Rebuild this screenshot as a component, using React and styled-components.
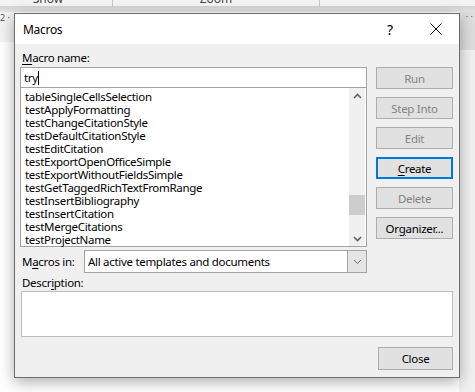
import React from 'react';
import styled, { createGlobalStyle } from 'styled-components';

const macros = [
  'tableSingleCellsSelection',
  'testApplyFormatting',
  'testChangeCitationStyle',
  'testDefaultCitationStyle',
  'testEditCitation',
  'testExportOpenOfficeSimple',
  'testExportWithoutFieldsSimple',
  'testGetTaggedRichTextFromRange',
  'testInsertBibliography',
  'testInsertCitation',
  'testMergeCitations',
  'testProjectName',
];

const GlobalStyle = createGlobalStyle`
  body {
    margin: 0;
    background: #ffffff;
    overflow: hidden;
    font-family: "Noto Sans", "Open Sans", sans-serif;
  }
`;

const Page = styled.div`
  position: relative;
  width: 475px;
  height: 392px;
  overflow: hidden;
  background: #ffffff;
`;

const Ribbon = styled.div`
  height: 6px;
  display: flex;
  background: #f3f3f3;
  overflow: hidden;
`;

const RibbonGroup = styled.div`
  width: ${(p) => p.w}px;
  box-sizing: border-box;
  padding-right: ${(p) => p.pr || 0}px;
  border-right: 1px solid #c6c6c6;
  font-size: 12px;
  line-height: 12px;
  color: #444;
  text-align: center;
  margin-top: -7px;
`;

const RibbonEdge = styled.div`
  height: 6px;
  background: linear-gradient(#d2d2d2, #e4e4e4);
`;

const Workspace = styled.div`
  display: flex;
  height: 380px;
`;

const SideRuler = styled.div`
  width: 14px;
  background: linear-gradient(#f2f2f2 0, #f2f2f2 30px, #ffffff 30px);
  font-size: 9px;
  color: #555;
  padding-top: 1px;
  line-height: 10px;
`;

const Document = styled.div`
  flex: 1;
  background: #ffffff;
`;

const RightRuler = styled.div`
  width: 16px;
  background: linear-gradient(#dedede 0, #dedede 38px, #f1f1f1 38px);
  font-size: 9px;
  color: #666;
  line-height: 10px;
  text-align: right;
  padding-right: 2px;
  box-sizing: border-box;
`;

const Dialog = styled.div`
  position: absolute;
  left: 14px;
  top: 13px;
  width: 446px;
  height: 365px;
  box-sizing: border-box;
  border: 1px solid #6d6d6d;
  background: #f0f0f0;
  box-shadow: 0 4px 14px rgba(0, 0, 0, 0.32);
  display: flex;
  flex-direction: column;
  font-size: 11.5px;
  letter-spacing: -0.3px;
  color: #000;
`;

const TitleBar = styled.div`
  height: 30px;
  flex-shrink: 0;
  background: #ffffff;
  display: flex;
  align-items: center;
  padding-left: 8px;
`;

const Title = styled.div`
  flex: 1;
  font-size: 12px;
`;

const Help = styled.div`
  width: 46px;
  text-align: center;
  font-size: 14px;
`;

const CloseX = styled.div`
  width: 46px;
  display: flex;
  justify-content: center;
  align-items: center;
`;

const Body = styled.div`
  flex: 1;
  display: flex;
  flex-direction: column;
  padding: 0 6px 7px 5px;
`;

const Top = styled.div`
  display: flex;
  gap: 9px;
`;

const LeftCol = styled.div`
  width: 347px;
  display: flex;
  flex-direction: column;
`;

const Label = styled.div`
  line-height: 15px;
  padding-left: 2px;
  margin: ${(p) => p.m || '0'};
  u {
    text-decoration: underline;
    text-underline-offset: 2px;
  }
`;

const NameInput = styled.div`
  height: 20px;
  box-sizing: border-box;
  border: 1px solid #a3a3a3;
  border-bottom: none;
  background: #fff;
  padding-left: 3px;
  display: flex;
  align-items: center;
`;

const Caret = styled.span`
  display: inline-block;
  width: 1px;
  height: 14px;
  background: #000;
`;

const List = styled.div`
  height: 160px;
  box-sizing: border-box;
  border: 1px solid #a3a3a3;
  background: #fff;
  display: flex;
`;

const Items = styled.div`
  flex: 1;
  padding: 2px 0 0 4px;
`;

const Item = styled.div`
  line-height: 13px;
  height: 13px;
  white-space: nowrap;
`;

const ScrollBar = styled.div`
  width: 16px;
  margin-right: 1px;
  background: #f0f0f0;
  display: flex;
  flex-direction: column;
  align-items: center;
  justify-content: space-between;
  padding: 5px 0 4px;
  box-sizing: border-box;
  position: relative;
`;

const Thumb = styled.div`
  position: absolute;
  left: 0;
  right: 0;
  top: 107px;
  height: 20px;
  background: #cdcdcd;
`;

const SelectRow = styled.div`
  display: flex;
  align-items: center;
  margin-top: 3px;
`;

const Select = styled.div`
  margin-left: auto;
  width: 283px;
  height: 23px;
  box-sizing: border-box;
  border: 1px solid #a3a3a3;
  background: #fff;
  display: flex;
`;

const SelectText = styled.div`
  flex: 1;
  line-height: 21px;
  padding-left: 3px;
`;

const DropButton = styled.div`
  width: 18px;
  background: #e5e5e5;
  border-left: 1px solid #a3a3a3;
  display: flex;
  align-items: center;
  justify-content: center;
`;

const RightCol = styled.div`
  width: 77px;
  display: flex;
  flex-direction: column;
  gap: 8px;
  padding-top: 23px;
`;

const Button = styled.div`
  height: 22px;
  box-sizing: border-box;
  border: ${(p) => (p.focused ? '2px solid #0078d7' : '1px solid #adadad')};
  background: #e1e1e1;
  color: ${(p) => (p.disabled ? '#838383' : '#000')};
  display: flex;
  align-items: center;
  justify-content: center;
  u {
    text-underline-offset: 2px;
  }
`;

const DescBox = styled.div`
  height: 46px;
  margin-left: 1px;
  box-sizing: border-box;
  border: 1px solid #bdbdbd;
  background: #fff;
`;

const Footer = styled.div`
  display: flex;
  justify-content: flex-end;
  margin-top: 10px;
`;

const CloseButton = styled(Button)`
  width: 75px;
  height: 23px;
`;

const Chevron = ({ dir = 'down', color = '#606060', w = 1.6 }) => (
  <svg width="9" height="6" viewBox="0 0 9 6">
    <path
      d={dir === 'up' ? 'M1 5 L4.5 1.5 L8 5' : 'M1 1 L4.5 4.5 L8 1'}
      fill="none"
      stroke={color}
      strokeWidth={w}
    />
  </svg>
);

export default function App() {
  return (
    <Page>
      <GlobalStyle />
      <Ribbon>
        <RibbonGroup w={113} pr={16}>Show</RibbonGroup>
        <RibbonGroup w={207}>Zoom</RibbonGroup>
      </Ribbon>
      <RibbonEdge />
      <Workspace>
        <SideRuler>2 ·</SideRuler>
        <Document />
        <RightRuler>· ·</RightRuler>
      </Workspace>

      <Dialog>
        <TitleBar>
          <Title>Macros</Title>
          <Help>?</Help>
          <CloseX>
            <svg width="12" height="12" viewBox="0 0 12 12">
              <path d="M0.5 0.5 L11.5 11.5 M11.5 0.5 L0.5 11.5" stroke="#000" strokeWidth="1" />
            </svg>
          </CloseX>
        </TitleBar>
        <Body>
          <Top>
            <LeftCol>
              <Label m="6px 0 2px">
                <u>M</u>acro name:
              </Label>
              <NameInput>
                try<Caret />
              </NameInput>
              <List>
                <Items>
                  {macros.map((m) => (
                    <Item key={m}>{m}</Item>
                  ))}
                </Items>
                <ScrollBar>
                  <Chevron dir="up" />
                  <Thumb />
                  <Chevron dir="down" />
                </ScrollBar>
              </List>
              <SelectRow>
                <Label>
                  M<u>a</u>cros in:
                </Label>
                <Select>
                  <SelectText>All active templates and documents</SelectText>
                  <DropButton>
                    <Chevron dir="down" color="#666" w={1} />
                  </DropButton>
                </Select>
              </SelectRow>
            </LeftCol>
            <RightCol>
              <Button disabled>Run</Button>
              <Button disabled>Step Into</Button>
              <Button disabled>Edit</Button>
              <Button focused>
                <u>C</u>reate
              </Button>
              <Button disabled>Delete</Button>
              <Button>
                Or<u>g</u>anizer...
              </Button>
            </RightCol>
          </Top>
          <Label m="2px 0 1px">
            Descr<u>i</u>ption:
          </Label>
          <DescBox />
          <Footer>
            <CloseButton>Close</CloseButton>
          </Footer>
        </Body>
      </Dialog>
    </Page>
  );
}
